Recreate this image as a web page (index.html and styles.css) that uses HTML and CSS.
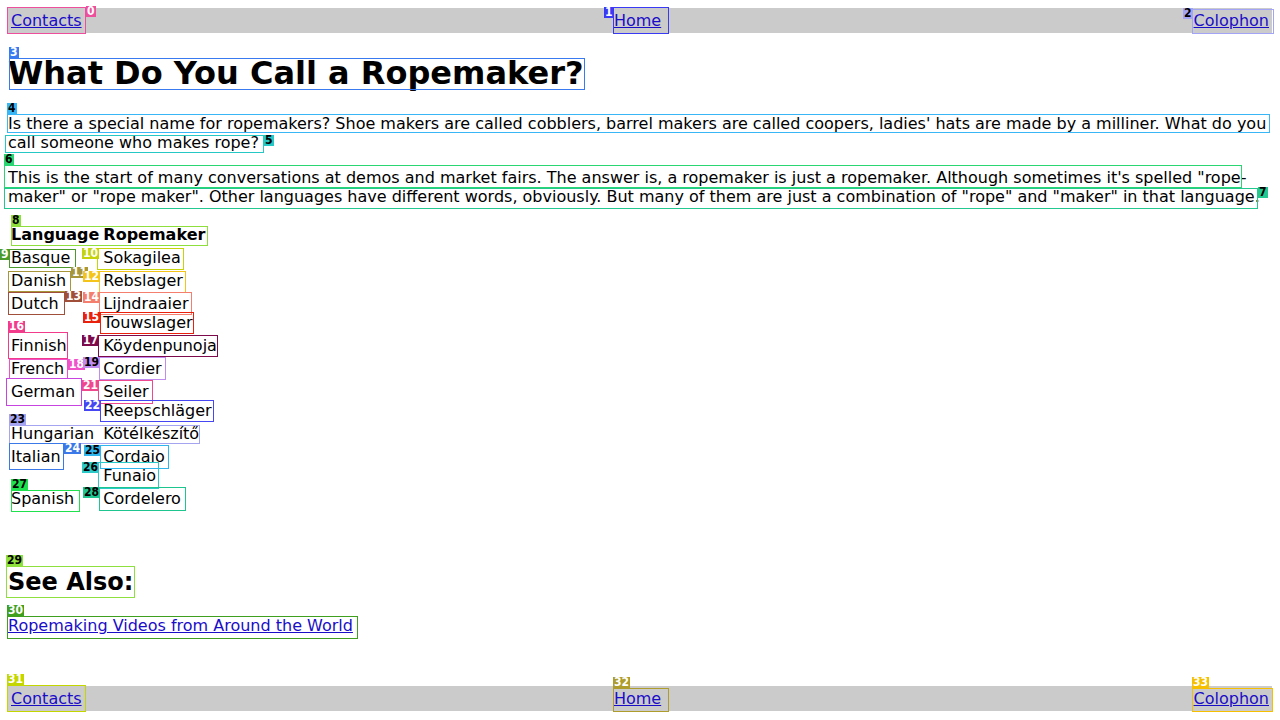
FILE: index.html
```html
<!DOCTYPE html>
<html lang="en">
<head>
<meta charset="utf-8">
<title>What Do You Call a Ropemaker?</title>
<link rel="stylesheet" href="styles.css">
</head>
<body>
<nav class="bar">
  <a href="#">Contacts</a>
  <a href="#">Home</a>
  <a href="#">Colophon</a>
</nav>
<h1>What Do You Call a Ropemaker?</h1>
<p>Is there a special name for ropemakers? Shoe makers are called cobblers, barrel makers are called coopers, ladies' hats are made by a milliner. What do you call someone who makes rope?</p>
<p>This is the start of many conversations at demos and market fairs. The answer is, a ropemaker is just a ropemaker. Although sometimes it's spelled "rope-maker" or "rope maker". Other languages have different words, obviously. But many of them are just a combination of "rope" and "maker" in that language.</p>
<table class="words">
  <tr><th>Language</th><th>Ropemaker</th></tr>
  <tr><td>Basque</td><td>Sokagilea</td></tr>
  <tr><td>Danish</td><td>Rebslager</td></tr>
  <tr><td>Dutch</td><td>Lijndraaier<br>Touwslager</td></tr>
  <tr><td>Finnish</td><td>Köydenpunoja</td></tr>
  <tr><td>French</td><td>Cordier</td></tr>
  <tr><td>German</td><td>Seiler<br>Reepschläger</td></tr>
  <tr><td>Hungarian</td><td>Kötélkészítő</td></tr>
  <tr><td>Italian</td><td>Cordaio<br>Funaio</td></tr>
  <tr><td>Spanish</td><td>Cordelero</td></tr>
</table>
<h2>See Also:</h2>
<p><a href="#">Ropemaking Videos from Around the World</a></p>
<footer class="bar foot">
  <a href="#">Contacts</a>
  <a href="#">Home</a>
  <a href="#">Colophon</a>
</footer>

<div class="marks" aria-hidden="true">
  <div class="m m0"><b class="box"></b><b class="tag">0</b></div>
  <div class="m m1"><b class="box"></b><b class="tag">1</b></div>
  <div class="m m2 dk"><b class="box"></b><b class="tag">2</b></div>
  <div class="m m3"><b class="box"></b><b class="tag">3</b></div>
  <div class="m m4 dk"><b class="box"></b><b class="tag">4</b></div>
  <div class="m m5 dk"><b class="box"></b><b class="tag">5</b></div>
  <div class="m m6 dk"><b class="box"></b><b class="tag">6</b></div>
  <div class="m m7 dk"><b class="box"></b><b class="tag">7</b></div>
  <div class="m m8 dk"><b class="box"></b><b class="tag">8</b></div>
  <div class="m m9"><b class="box"></b><b class="tag">9</b></div>
  <div class="m m10"><b class="box"></b><b class="tag">10</b></div>
  <div class="m m11"><b class="box"></b><b class="tag">11</b></div>
  <div class="m m12"><b class="box"></b><b class="tag">12</b></div>
  <div class="m m13"><b class="box"></b><b class="tag">13</b></div>
  <div class="m m14"><b class="box"></b><b class="tag">14</b></div>
  <div class="m m15"><b class="box"></b><b class="tag">15</b></div>
  <div class="m m16"><b class="box"></b><b class="tag">16</b></div>
  <div class="m m17"><b class="box"></b><b class="tag">17</b></div>
  <div class="m m18"><b class="box"></b><b class="tag">18</b></div>
  <div class="m m19 dk"><b class="box"></b><b class="tag">19</b></div>
  <div class="m m20"><b class="box"></b></div>
  <div class="m m21"><b class="box"></b><b class="tag">21</b></div>
  <div class="m m22"><b class="box"></b><b class="tag">22</b></div>
  <div class="m m23 dk"><b class="box"></b><b class="tag">23</b></div>
  <div class="m m24"><b class="box"></b><b class="tag">24</b></div>
  <div class="m m25 dk"><b class="box"></b><b class="tag">25</b></div>
  <div class="m m26 dk"><b class="box"></b><b class="tag">26</b></div>
  <div class="m m27 dk"><b class="box"></b><b class="tag">27</b></div>
  <div class="m m28 dk"><b class="box"></b><b class="tag">28</b></div>
  <div class="m m29 dk"><b class="box"></b><b class="tag">29</b></div>
  <div class="m m30"><b class="box"></b><b class="tag">30</b></div>
  <div class="m m31"><b class="box"></b><b class="tag">31</b></div>
  <div class="m m32"><b class="box"></b><b class="tag">32</b></div>
  <div class="m m33"><b class="box"></b><b class="tag">33</b></div>
</div>
</body>
</html>
```
FILE: styles.css
```css
html { background: #fff; }
body {
  margin: 8px;
  font-family: "DejaVu Sans", "Noto Sans", sans-serif;
  font-size: 16px;
  color: #000;
}
a { color: #1a0dc8; }

.bar {
  display: flex;
  justify-content: space-between;
  align-items: flex-start;
  background: #cbcbcb;
}
.bar a { padding: 3px; }
.foot { margin-top: 51px; }

h1 { font-size: 32px; margin: 21.44px 0; }
h2 { font-size: 24px; margin: 19.92px 0; }

.words { margin-bottom: 57px; }
.words th { text-align: left; }
.words td { vertical-align: top; }

/* annotation overlay */
.marks { position: absolute; left: 0; top: 0; width: 0; height: 0; }
.box, .tag { position: absolute; display: block; }
.box {
  box-sizing: border-box;
  border: 1px solid var(--c);
}
.tag {
  background: var(--c);
  color: #fff;
  font-family: "DejaVu Sans Condensed", "DejaVu Sans", sans-serif;
  font-stretch: condensed;
  font-weight: bold;
  font-size: 12px;
  line-height: 11px;
  height: 11px;
  padding: 0 1px;
}
.dk .tag { color: #000; }

.m0 { --c: #ee4f9c; } .m0 .box { left: 7px; top: 7px; width: 79px; height: 27px; } .m0 .tag { left: 86px; top: 6px; }
.m1 { --c: #3a3af5; } .m1 .box { left: 613px; top: 7px; width: 56px; height: 27px; } .m1 .tag { left: 604px; top: 7px; }
.m2 { --c: #a4a4f7; } .m2 .box { left: 1192px; top: 9px; width: 82px; height: 25px; } .m2 .tag { left: 1183px; top: 8px; }
.m3 { --c: #3a7af0; } .m3 .box { left: 9px; top: 58px; width: 576px; height: 32px; } .m3 .tag { left: 9px; top: 47px; }
.m4 { --c: #38b6f5; } .m4 .box { left: 7px; top: 114px; width: 1263px; height: 19px; } .m4 .tag { left: 7px; top: 103px; }
.m5 { --c: #26c8c6; } .m5 .box { left: 5px; top: 135px; width: 259px; height: 18px; } .m5 .tag { left: 264px; top: 135px; }
.m6 { --c: #2ad672; } .m6 .box { left: 4px; top: 165px; width: 1238px; height: 23px; } .m6 .tag { left: 4px; top: 154px; }
.m7 { --c: #22c890; } .m7 .box { left: 4px; top: 188px; width: 1254px; height: 21px; } .m7 .tag { left: 1258px; top: 187px; }
.m8 { --c: #8ede3c; } .m8 .box { left: 11px; top: 226px; width: 197px; height: 20px; } .m8 .tag { left: 11px; top: 215px; }
.m9 { --c: #4b9b2b; } .m9 .box { left: 9px; top: 249px; width: 67px; height: 19px; } .m9 .tag { left: 0; top: 249px; }
.m10 { --c: #c5d30a; } .m10 .box { left: 97px; top: 248px; width: 87px; height: 22px; } .m10 .tag { left: 82px; top: 248px; }
.m11 { --c: #a8963a; } .m11 .box { left: 8px; top: 271px; width: 63px; height: 21px; } .m11 .tag { left: 71px; top: 267px; }
.m12 { --c: #f5c41a; } .m12 .box { left: 99px; top: 271px; width: 87px; height: 22px; } .m12 .tag { left: 83px; top: 271px; }
.m13 { --c: #a0503a; } .m13 .box { left: 8px; top: 292px; width: 57px; height: 23px; } .m13 .tag { left: 65px; top: 291px; }
.m14 { --c: #f57f6e; } .m14 .box { left: 99px; top: 292px; width: 93px; height: 23px; } .m14 .tag { left: 83px; top: 292px; }
.m15 { --c: #e8200c; } .m15 .box { left: 100px; top: 312px; width: 94px; height: 22px; } .m15 .tag { left: 83px; top: 312px; }
.m16 { --c: #f23b8a; } .m16 .box { left: 8px; top: 332px; width: 60px; height: 27px; } .m16 .tag { left: 8px; top: 321px; }
.m17 { --c: #7d0b4c; } .m17 .box { left: 98px; top: 335px; width: 120px; height: 22px; } .m17 .tag { left: 82px; top: 335px; }
.m18 { --c: #f050c8; } .m18 .box { left: 9px; top: 359px; width: 59px; height: 20px; } .m18 .tag { left: 68px; top: 359px; }
.m19 { --c: #c08cf0; } .m19 .box { left: 99px; top: 357px; width: 67px; height: 23px; } .m19 .tag { left: 83px; top: 357px; }
.m20 { --c: #c844e0; } .m20 .box { left: 6px; top: 378px; width: 76px; height: 28px; }
.m21 { --c: #f0488e; } .m21 .box { left: 98px; top: 380px; width: 55px; height: 24px; } .m21 .tag { left: 82px; top: 380px; }
.m22 { --c: #4646f2; } .m22 .box { left: 100px; top: 400px; width: 114px; height: 22px; } .m22 .tag { left: 84px; top: 400px; }
.m23 { --c: #a4a4f0; } .m23 .box { left: 9px; top: 425px; width: 191px; height: 19px; } .m23 .tag { left: 9px; top: 414px; }
.m24 { --c: #3b78e8; } .m24 .box { left: 9px; top: 443px; width: 55px; height: 27px; } .m24 .tag { left: 64px; top: 443px; }
.m25 { --c: #2fb6ef; } .m25 .box { left: 100px; top: 445px; width: 69px; height: 24px; } .m25 .tag { left: 84px; top: 445px; }
.m26 { --c: #2cc9c9; } .m26 .box { left: 98px; top: 462px; width: 61px; height: 27px; } .m26 .tag { left: 82px; top: 462px; }
.m27 { --c: #1fe04d; } .m27 .box { left: 11px; top: 490px; width: 69px; height: 22px; } .m27 .tag { left: 11px; top: 479px; }
.m28 { --c: #1fc58e; } .m28 .box { left: 99px; top: 487px; width: 87px; height: 24px; } .m28 .tag { left: 83px; top: 487px; }
.m29 { --c: #8ee03e; } .m29 .box { left: 6px; top: 566px; width: 129px; height: 32px; } .m29 .tag { left: 6px; top: 555px; }
.m30 { --c: #3f9f1f; } .m30 .box { left: 7px; top: 616px; width: 351px; height: 23px; } .m30 .tag { left: 7px; top: 605px; }
.m31 { --c: #c4d600; } .m31 .box { left: 7px; top: 685px; width: 79px; height: 27px; } .m31 .tag { left: 7px; top: 674px; }
.m32 { --c: #ae9c2c; } .m32 .box { left: 613px; top: 688px; width: 56px; height: 24px; } .m32 .tag { left: 613px; top: 677px; }
.m33 { --c: #f6c000; } .m33 .box { left: 1192px; top: 688px; width: 81px; height: 24px; } .m33 .tag { left: 1192px; top: 677px; }
```
